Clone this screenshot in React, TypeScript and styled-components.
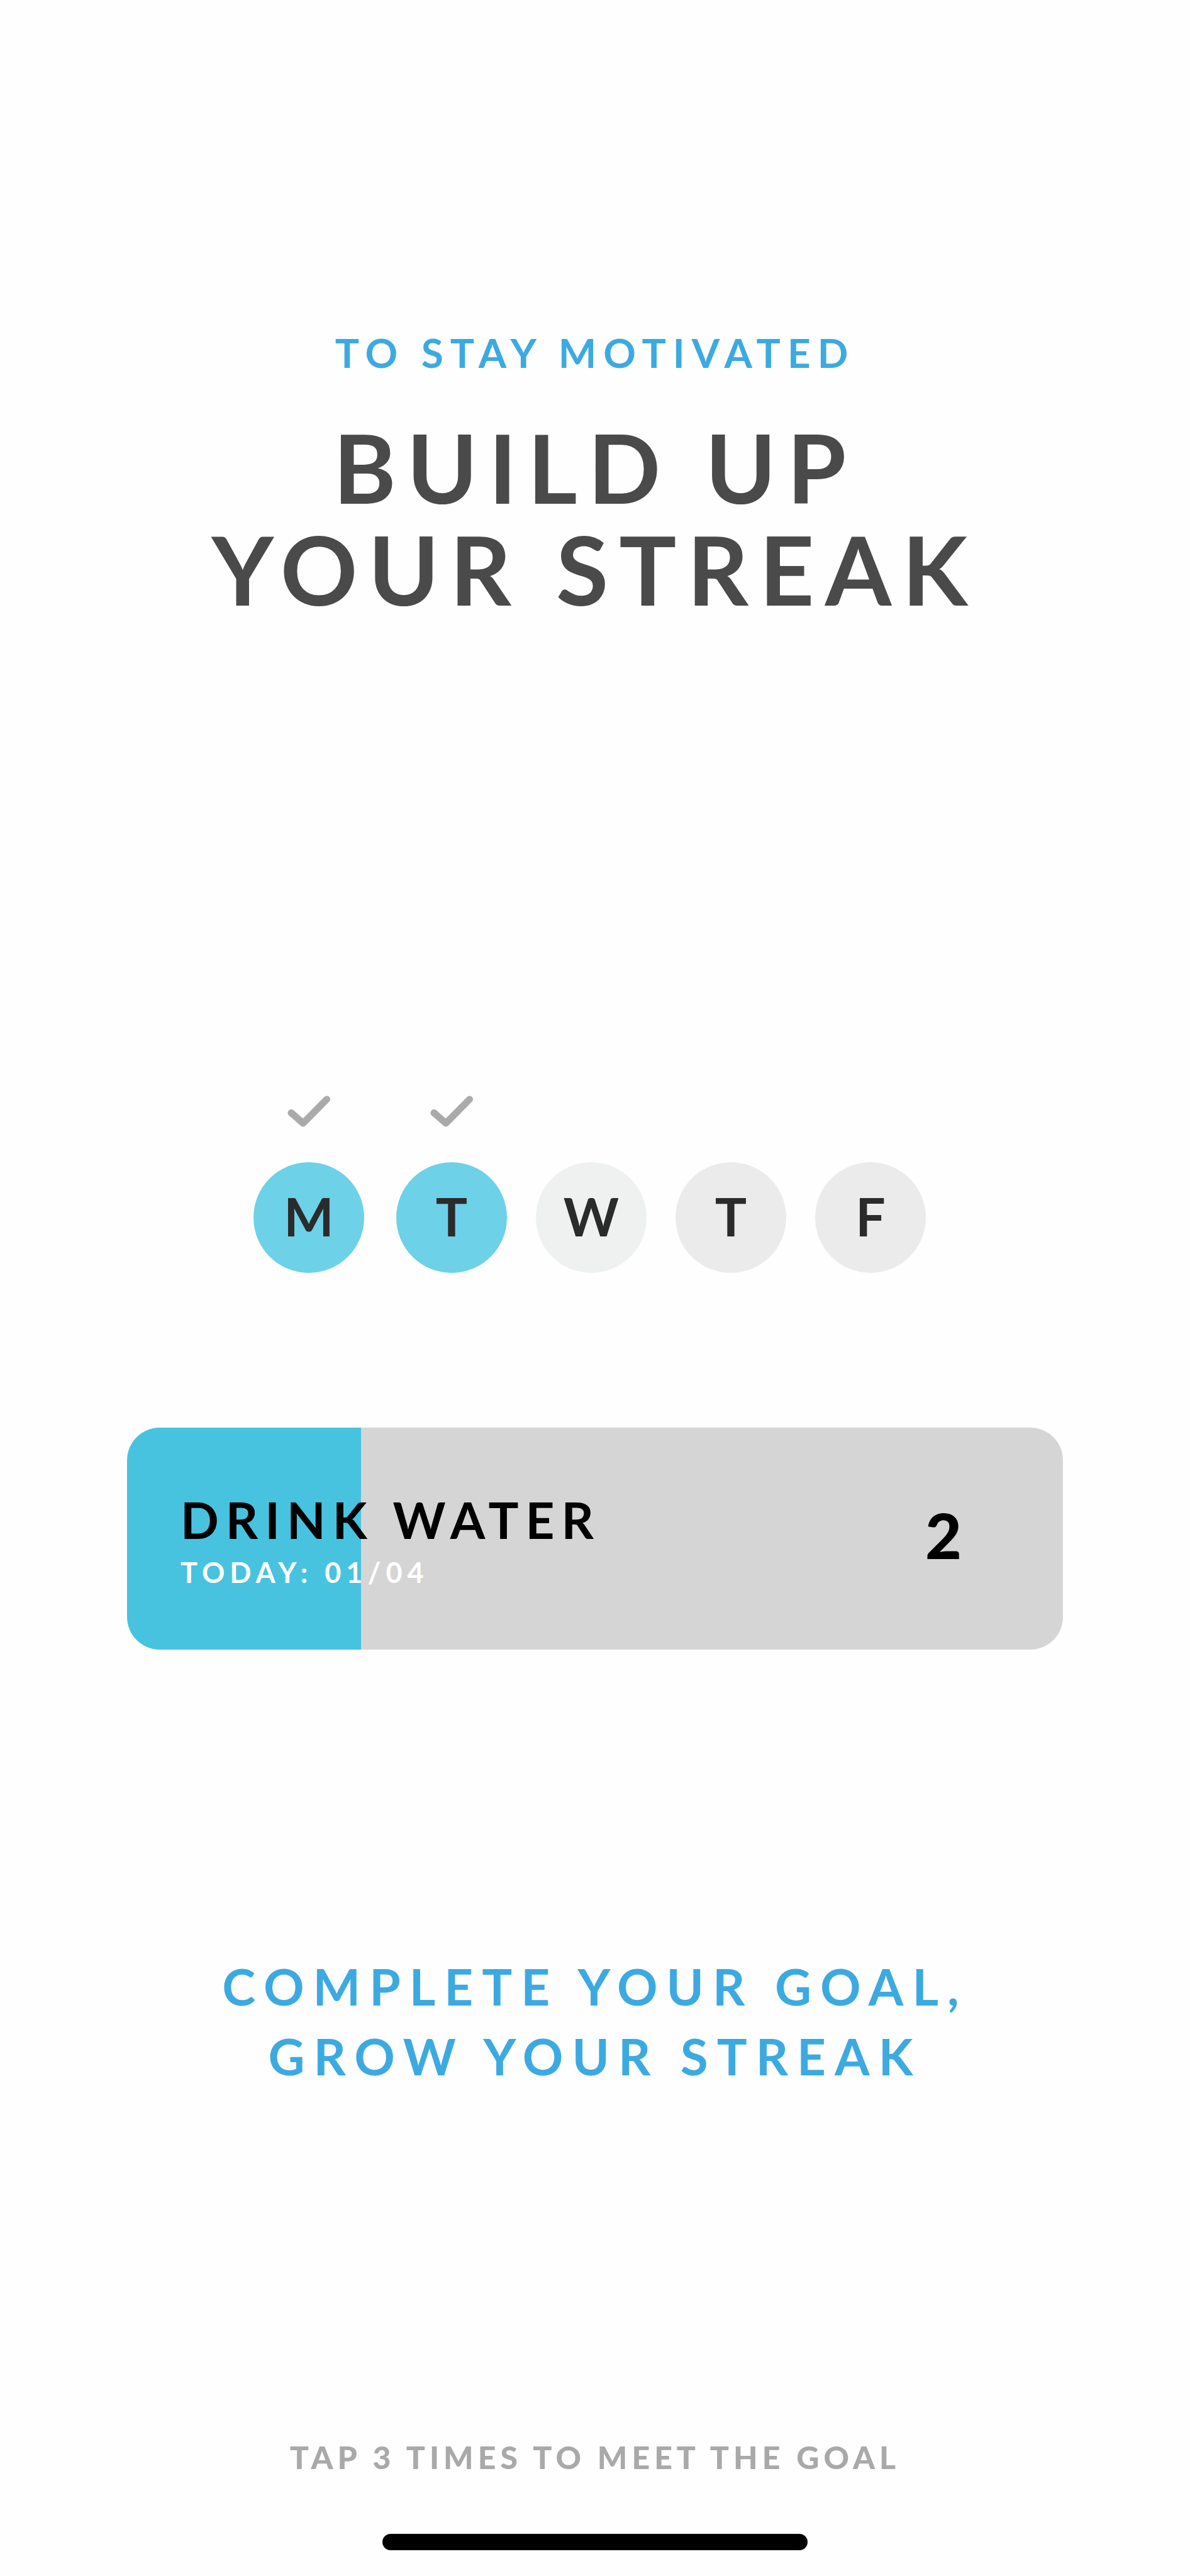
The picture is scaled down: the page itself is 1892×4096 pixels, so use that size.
import React, { useState } from "react";
import styled, { createGlobalStyle } from "styled-components";

const GOAL = 4;
const STREAK = 2;

const doneDays = ["M", "T"];
const nextDays = [
  { label: "W", today: true },
  { label: "T", today: false },
  { label: "F", today: false }
];

const pad = (n: number) => String(n).padStart(2, "0");

const Check: React.FC<{}> = () => (
  <CheckIcon viewBox="0 0 68 50" role="img" aria-label="done">
    <path d="M6 27.5 L25 44 L62.5 6" />
  </CheckIcon>
);

const App: React.FC<{}> = () => {
  const [count, setCount] = useState(1);
  const tapHandler = () => setCount(Math.min(count + 1, GOAL));
  return (
    <>
      <GlobalStyle />
      <Container>
        <Header>
          <Subtitle>TO STAY MOTIVATED</Subtitle>
          <Title>
            BUILD UP
            <br />
            YOUR STREAK
          </Title>
        </Header>
        <Week>
          <Days gap={51}>
            {doneDays.map((label, i) => (
              <Day key={i}>
                <Check />
                <Circle color="#6dd1e8">{label}</Circle>
              </Day>
            ))}
          </Days>
          <Days gap={46}>
            {nextDays.map((day, i) => (
              <Day key={i}>
                <Circle color={day.today ? "#eef1f0" : "#ebebeb"}>
                  {day.label}
                </Circle>
              </Day>
            ))}
          </Days>
        </Week>
        <Habit
          type="button"
          onClick={tapHandler}
          style={{ backgroundSize: `${(count / GOAL) * 100}% 100%` }}
        >
          <HabitText>
            <HabitName>DRINK WATER</HabitName>
            <HabitCount>
              TODAY: {pad(count)}/{pad(GOAL)}
            </HabitCount>
          </HabitText>
          <Streak>{STREAK}</Streak>
        </Habit>
        <Prompt>
          COMPLETE YOUR GOAL,
          <br />
          GROW YOUR STREAK
        </Prompt>
        <Hint>TAP 3 TIMES TO MEET THE GOAL</Hint>
        <HomeBar />
      </Container>
    </>
  );
};

export default App;

const GlobalStyle = createGlobalStyle`
  * {
    box-sizing: border-box;
  }
  body {
    margin: 0;
    background: #fefefe;
    font-family: Lato, "Open Sans", sans-serif;
  }
`;

const Container = styled.main`
  min-height: 100vh;
  padding: 521px 202px 41px;
  display: flex;
  flex-direction: column;
  align-items: center;
  text-align: center;
`;

const Header = styled.header`
  display: flex;
  flex-direction: column;
  gap: 60px;
`;

const Subtitle = styled.p`
  margin: 0;
  font-size: 64px;
  font-weight: 700;
  line-height: 80px;
  letter-spacing: 11px;
  color: #3caae1;
`;

const Title = styled.h1`
  margin: 0;
  font-size: 152px;
  font-weight: 700;
  line-height: 162px;
  letter-spacing: 17px;
  color: #4a4a4a;
`;

const Week = styled.section`
  margin-top: 757px;
  padding-right: 17px;
  display: flex;
  align-items: flex-end;
  gap: 46px;
`;

const Days = styled.div<{ gap: number }>`
  display: flex;
  gap: ${props => props.gap}px;
`;

const Day = styled.div`
  display: flex;
  flex-direction: column;
  align-items: center;
  gap: 56px;
`;

const CheckIcon = styled.svg`
  width: 68px;
  height: 50px;
  fill: none;
  stroke: #aaaaaa;
  stroke-width: 11;
  stroke-linecap: round;
  stroke-linejoin: round;
`;

const Circle = styled.div<{ color: string }>`
  width: 176px;
  height: 176px;
  border-radius: 50%;
  background: ${props => props.color};
  color: #2b2b2b;
  font-size: 84px;
  font-weight: 700;
  line-height: 172px;
`;

const Habit = styled.button`
  width: 100%;
  margin-top: 246px;
  padding: 98px 161px 95px 85px;
  display: flex;
  align-items: flex-start;
  justify-content: space-between;
  border: none;
  border-radius: 52px;
  background: #d5d5d5 linear-gradient(#48c3df, #48c3df) no-repeat left top;
  color: #000000;
  font-family: inherit;
  text-align: left;
  cursor: pointer;
`;

const HabitText = styled.span`
  display: flex;
  flex-direction: column;
  gap: 8px;
`;

const HabitName = styled.span`
  font-size: 80px;
  font-weight: 700;
  line-height: 96px;
  letter-spacing: 11px;
`;

const HabitCount = styled.span`
  font-size: 45px;
  font-weight: 700;
  line-height: 56px;
  letter-spacing: 8px;
  color: #ffffff;
`;

const Streak = styled.span`
  font-size: 100px;
  font-weight: 900;
  line-height: 144px;
`;

const Prompt = styled.p`
  margin: 480px 0 0;
  font-size: 80px;
  font-weight: 700;
  line-height: 111px;
  letter-spacing: 14px;
  color: #3caae1;
`;

const Hint = styled.p`
  margin: 552px 0 0;
  font-size: 50px;
  font-weight: 900;
  line-height: 60px;
  letter-spacing: 7px;
  color: #a9a9a9;
`;

const HomeBar = styled.div`
  width: 100%;
  max-width: 676px;
  height: 26px;
  margin-top: 92px;
  border-radius: 13px;
  background: #000000;
`;
